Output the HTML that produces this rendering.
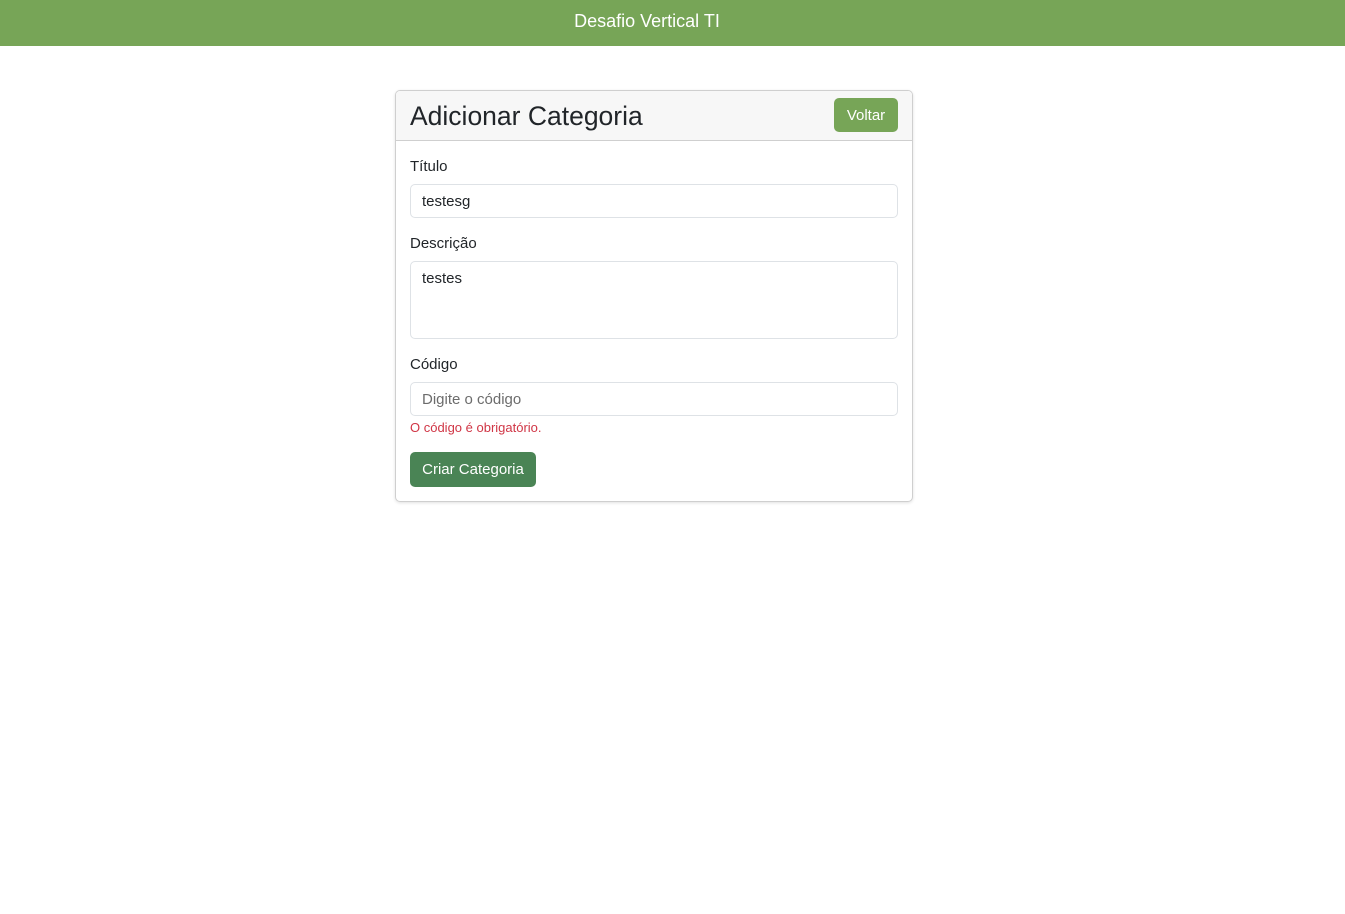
<!DOCTYPE html>
<html><head><meta charset="utf-8"><style>
*{box-sizing:border-box;margin:0;padding:0}
body{width:1345px;height:914px;background:#fff;font-family:"Liberation Sans",sans-serif;color:#212529;position:relative;overflow:hidden}
.nav{position:absolute;left:0;top:0;width:1345px;height:46px;background:#77a557}
.nav span{position:absolute;left:0;width:1294px;text-align:center;color:#fff;font-size:18px;top:11px}
.card{position:absolute;left:395px;top:90px;width:518px;height:412px;border:1px solid #cfcfcf;border-radius:5px;box-shadow:0 1px 3px rgba(0,0,0,.12);overflow:hidden}
.hdr{height:50px;background:#f7f7f7;border-bottom:1px solid #cfcfcf;position:relative}
.hdr h1{position:absolute;left:14px;top:10px;font-size:26.5px;font-weight:normal}
.btn{position:absolute;color:#fff;border-radius:5px;font-size:15px;text-align:center}
.lbl{position:absolute;left:14px;font-size:15px}
.inp{position:absolute;left:14px;width:488px;border:1px solid #dee2e6;border-radius:5px;font-size:15px;padding:0 11px}
</style></head><body>
<div class="nav"><span>Desafio Vertical TI</span></div>
<div class="card">
<div class="hdr"><h1>Adicionar Categoria</h1>
<div class="btn" style="left:438px;top:7px;width:64px;height:34px;line-height:35px;background:#77a557">Voltar</div></div>
<div class="lbl" style="top:67px">Título</div>
<div class="inp" style="top:93px;height:34px;line-height:34px">testesg</div>
<div class="lbl" style="top:144px">Descrição</div>
<div class="inp" style="top:170px;height:78px;padding-top:8px">testes</div>
<div class="lbl" style="top:265px">Código</div>
<div class="inp" style="top:291px;height:34px;line-height:34px;color:#6c6c6c">Digite o código</div>
<div style="position:absolute;left:14px;top:329px;font-size:13px;color:#d03545">O código é obrigatório.</div>
<div class="btn" style="left:14px;top:361px;width:126px;height:35px;line-height:36px;background:#4a8455">Criar Categoria</div>
</div>
</body></html>
